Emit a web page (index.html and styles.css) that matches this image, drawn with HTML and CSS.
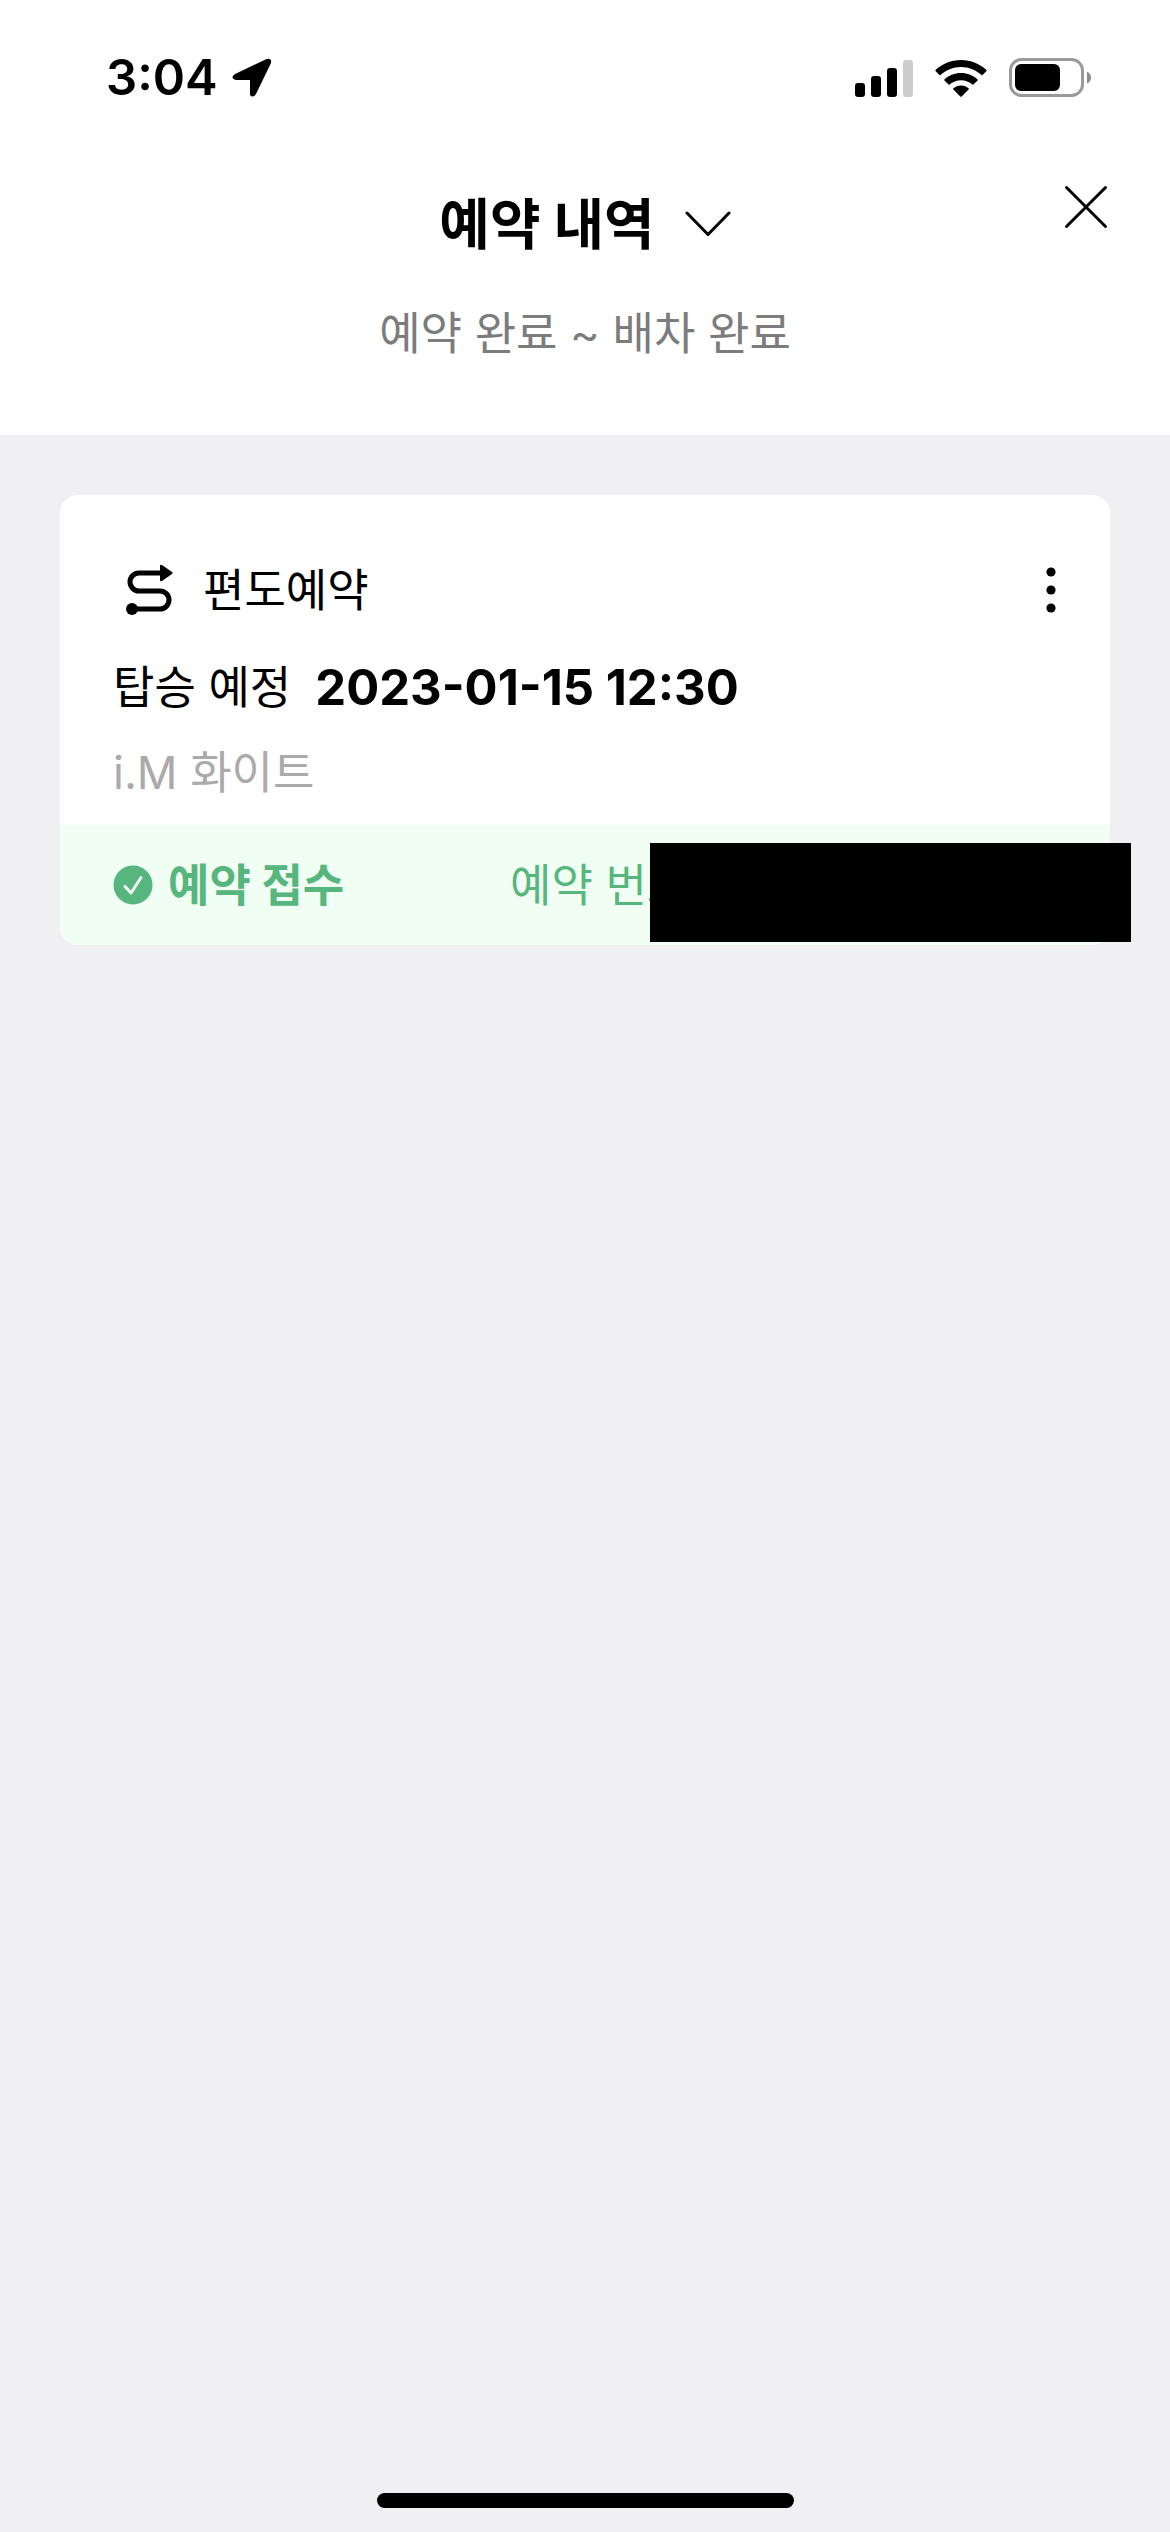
FILE: index.html
```html
<!DOCTYPE html>
<html lang="ko">
<head>
<meta charset="utf-8">
<meta name="viewport" content="width=device-width, initial-scale=1">
<title>예약 내역</title>
<link rel="stylesheet" href="styles.css">
</head>
<body>
<div class="screen">
  <div class="status-bar">
    <div class="status-left">
      <span class="clock">3:04</span>
      <svg class="icon" width="40" height="40" viewBox="0 0 40 40" aria-hidden="true"><path d="M3 16 L34 1.200 Q40 -0.500 39 5 L24 36 Q21 40.500 18 37 V22 H4 Q-2.500 20 3 16 Z"/></svg>
    </div>
    <div class="status-right">
      <svg class="icon" width="58" height="38" viewBox="0 0 58 38" aria-hidden="true">
        <rect x="0" y="24" width="10" height="14" rx="3"/><rect x="16" y="17" width="10" height="21" rx="3"/><rect x="32" y="9" width="10" height="29" rx="3"/><rect x="48" y="1" width="10" height="37" rx="3" fill="#cccccc"/>
      </svg>
      <svg class="icon" width="52" height="38" viewBox="0 0 52 38" aria-hidden="true">
        <path d="M26 1 C16 1 7 5 0.500 11 Q0 11.500 0.500 12 L4.500 16 Q5 16.400 5.500 16 C11 11 18 8 26 8 S41 11 46.500 16 Q47 16.400 47.500 16 L51.500 12 Q52 11.500 51.500 11 C45 5 36 1 26 1Z"/>
        <path d="M26 14 C19.500 14 13.700 16.500 9.400 20.500 Q9 21 9.400 21.500 L13.600 25.600 Q14 26 14.500 25.600 C17.600 22.800 21.600 21.200 26 21.200 S34.400 22.800 37.500 25.600 Q38 26 38.400 25.600 L42.600 21.500 Q43 21 42.600 20.500 C38.300 16.500 32.500 14 26 14Z"/>
        <path d="M26 26.500 C23 26.500 20.400 27.600 18.400 29.300 Q18 30 18.400 30.500 L25.300 37.500 Q26 38.200 26.700 37.500 L33.600 30.500 Q34 30 33.600 29.300 C31.600 27.600 29 26.500 26 26.500Z"/>
      </svg>
      <svg class="icon" width="83" height="40" viewBox="0 0 83 40" aria-hidden="true">
        <rect x="1.500" y="1.500" width="72" height="36" rx="11" fill="none" stroke="#999999" stroke-width="3"/>
        <rect x="6" y="6" width="45" height="27" rx="6"/>
        <path d="M78 13.500 Q82 15.500 82 19.500 T78 25.500Z" fill="#8c8c8c"/>
      </svg>
    </div>
  </div>

  <header class="header">
    <div class="title-row">
      <h1 class="title"><button class="title-button" type="button">예약 내역
        <svg class="icon chevron" width="46" height="26" viewBox="0 0 46 26" aria-hidden="true"><path d="M2 2 L23 23.500 L44 2" fill="none" stroke="#000" stroke-width="3" stroke-linecap="round" stroke-linejoin="round"/></svg>
      </button></h1>
      <button class="close" type="button" aria-label="닫기">
        <svg class="icon" width="44" height="44" viewBox="0 0 44 44" aria-hidden="true"><path d="M2.500 2.500 L41.500 41.500 M41.500 2.500 L2.500 41.500" stroke="#000" stroke-width="3" stroke-linecap="round"/></svg>
      </button>
    </div>
    <p class="subtitle">예약 완료 ~ 배차 완료</p>
  </header>

  <main class="content">
    <article class="card">
      <div class="card-body">
        <div class="row trip">
          <svg class="icon" width="48" height="52" viewBox="0 0 48 52" aria-hidden="true">
            <path d="M36 9 H13 A9 9 0 0 0 13 27 H34 A9 9 0 0 1 34 45 H7" fill="none" stroke="#000" stroke-width="5"/>
            <circle cx="6" cy="45" r="6"/>
            <path d="M34 2 Q34 0 36 1 L46 8 Q47.500 9 46 10 L36 17 Q34 18 34 16Z"/>
          </svg>
          <span class="label">편도예약</span>
          <button class="more" type="button" aria-label="더보기">
            <svg class="icon" width="10" height="46" viewBox="0 0 10 46" aria-hidden="true"><circle cx="5" cy="5" r="4.600"/><circle cx="5" cy="23" r="4.600"/><circle cx="5" cy="41" r="4.600"/></svg>
          </button>
        </div>
        <div class="row when"><span>탑승 예정</span><time class="date" datetime="2023-01-15T12:30">2023-01-15 12:30</time></div>
        <p class="car">i.M 화이트</p>
      </div>
      <div class="card-status">
        <svg class="icon" width="40" height="40" viewBox="0 0 40 40" aria-hidden="true"><circle cx="20" cy="20" r="19.500" fill="#56b67d"/><path d="M12 21.500 L18 28 L28 12.500" fill="none" stroke="#f0fef4" stroke-width="3" stroke-linecap="round" stroke-linejoin="round"/></svg>
        <strong class="label state">예약 접수</strong>
        <span class="label number">예약 번호</span>
        <span class="mask"></span>
      </div>
    </article>
  </main>
  <div class="home-indicator"></div>
</div>
</body>
</html>
```
FILE: styles.css
```css
* {
  box-sizing: border-box;
}

body,
h1,
p {
  margin: 0;
}

body {
  background: #f0f0f3;
  color: #000;
  font-family: Inter, "Noto Sans CJK KR", sans-serif;
  font-size: 45px;
  line-height: 72px;
}

button {
  padding: 0;
  border: 0;
  background: none;
  color: inherit;
  font: inherit;
}

.icon {
  display: block;
  flex: none;
}

.screen {
  display: flex;
  flex-direction: column;
  min-height: 100vh;
}

.status-bar {
  display: flex;
  align-items: center;
  justify-content: space-between;
  height: 156px;
  padding: 0 78px 0 106px;
  background: #fff;
}

.status-left {
  display: flex;
  align-items: center;
  gap: 14px;
}

.status-right {
  display: flex;
  align-items: center;
  gap: 22px;
}

.clock {
  font-size: 49px;
  font-weight: 600;
}

.header {
  padding-bottom: 59px;
  background: #fff;
  text-align: center;
}

.title-row {
  display: grid;
  grid-template-columns: 1fr auto 1fr;
  align-items: center;
  height: 136px;
}

.title {
  grid-column: 2;
  font-size: 55px;
  font-weight: 700;
}

.title-button {
  display: flex;
  align-items: center;
  gap: 30px;
}

.close {
  display: grid;
  place-items: center;
  place-self: start end;
  width: 96px;
  height: 102px;
  margin-right: 36px;
}

.subtitle {
  line-height: 84px;
  color: #7c7c7c;
}

.content {
  flex: 1;
  padding: 60px;
}

.card {
  border-radius: 18px;
  background: #fff;
}

.card-body {
  padding: 47px 53px 16px;
}

.row {
  display: flex;
  align-items: center;
}

.label {
  padding-top: 2px;
}

.trip {
  height: 96px;
  padding-left: 13px;
  gap: 29px;
}

.more {
  display: grid;
  place-items: center;
  width: 48px;
  height: 72px;
  margin: 0 -18px 0 auto;
}

.when {
  height: 99px;
  gap: 24px;
}

.date {
  font-size: 49px;
  font-weight: 700;
}

.car {
  color: #aaa;
}

.card-status {
  position: relative;
  display: flex;
  align-items: center;
  height: 120px;
  padding-left: 53px;
  border-radius: 0 0 18px 18px;
  background: #f0fef4;
  color: #56b67d;
}

.state {
  margin-left: 15px;
  font-weight: 700;
}

.number {
  position: absolute;
  left: 450px;
}

/* Covers the reservation number */
.mask {
  position: absolute;
  top: 18px;
  right: -21px;
  left: 590px;
  height: 99px;
  background: #000;
}

.home-indicator {
  width: 417px;
  height: 15px;
  margin: 0 auto 24px;
  border-radius: 8px;
  background: #000;
}
```
